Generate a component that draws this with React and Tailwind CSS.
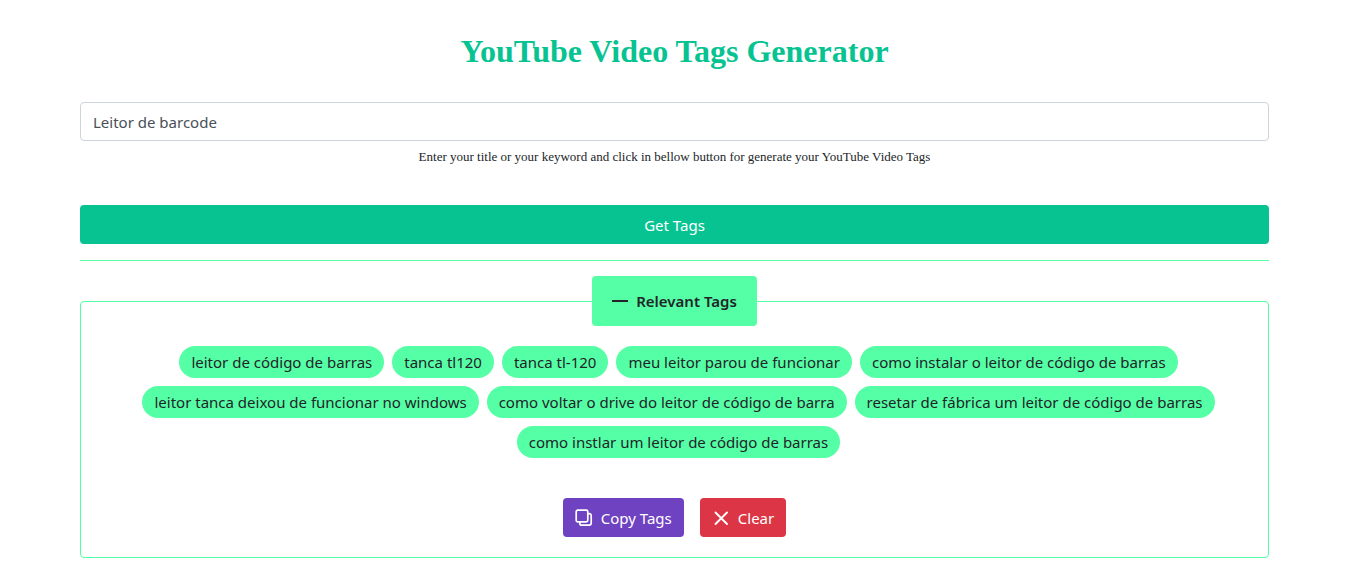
import React, { useState } from "react";

const TAGS = [
  "leitor de código de barras",
  "tanca tl120",
  "tanca tl-120",
  "meu leitor parou de funcionar",
  "como instalar o leitor de código de barras",
  "leitor tanca deixou de funcionar no windows",
  "como voltar o drive do leitor de código de barra",
  "resetar de fábrica um leitor de código de barras",
  "como instlar um leitor de código de barras",
];

function DashIcon() {
  return (
    <svg className="h-4 w-4" viewBox="0 0 16 16" fill="none" stroke="currentColor" strokeWidth="2" aria-hidden="true">
      <path d="M0 8h16" />
    </svg>
  );
}

function CopyIcon() {
  return (
    <svg className="h-[18px] w-[18px]" viewBox="0 0 18 18" fill="none" stroke="currentColor" strokeWidth="1.7" strokeLinejoin="round" strokeLinecap="round" aria-hidden="true">
      <rect x="1.2" y="1.2" width="11.6" height="11.6" rx="1.6" />
      <path d="M13 4.6h1.2a2 2 0 0 1 2 2v7.4a2.2 2.2 0 0 1-2.2 2.2H6.8a2 2 0 0 1-2-2V13" />
    </svg>
  );
}

function CloseIcon() {
  return (
    <svg className="h-[18px] w-[18px]" viewBox="0 0 18 18" fill="none" stroke="currentColor" strokeWidth="1.9" strokeLinecap="round" aria-hidden="true">
      <path d="M3.5 3.5l11.5 11.5M15 3.5L3.5 15" />
    </svg>
  );
}

export default function App() {
  const [title, setTitle] = useState("Leitor de barcode");
  const [tags, setTags] = useState(TAGS);

  return (
    <main className="bg-white pt-8 pr-[77px] pb-7 pl-20 font-['Noto_Sans',sans-serif] text-[15px] leading-6 text-[#212529]">
      <h1 className="text-center font-['Liberation_Serif',serif] text-[32px] leading-[38px] font-bold text-[#07c392]">
        YouTube Video Tags Generator
      </h1>

      <form className="mt-8" onSubmit={(e) => e.preventDefault()}>
        <input
          type="text"
          aria-label="Title or keyword"
          aria-describedby="hint"
          value={title}
          onChange={(e) => setTitle(e.target.value)}
          className="block h-[39px] w-full rounded border border-[#ced4da] bg-white px-3 text-[#495057]"
        />
        <p id="hint" className="mt-1.5 text-center font-['Liberation_Serif',serif] text-[13px] leading-5">
          Enter your title or your keyword and click in bellow button for generate your YouTube Video Tags
        </p>
        <button type="submit" className="mt-[38px] block h-[39px] w-full rounded bg-[#07c392] text-white">
          Get Tags
        </button>
      </form>

      <hr className="mt-4 border-t border-[#55ffa5]" />

      <fieldset className="mt-[15px] rounded border border-[#55ffa5] px-5 pb-5">
        <legend className="mx-auto flex h-[50px] items-center gap-2 rounded bg-[#55ffa5] px-5 font-semibold">
          <DashIcon />
          Relevant Tags
        </legend>
        <ul className="mt-5 flex flex-wrap justify-center gap-y-2">
          {tags.map((tag) => (
            <li key={tag} className="ml-2 rounded-full bg-[#55ffa5] px-3 py-1">
              {tag}
            </li>
          ))}
        </ul>
        <div className="mt-10 flex justify-center gap-4 text-white">
          <button type="button" onClick={() => navigator.clipboard?.writeText(tags.join(", "))} className="flex h-[39px] items-center gap-2 rounded bg-[#6f42c1] px-3">
            <CopyIcon />
            Copy Tags
          </button>
          <button type="button" onClick={() => setTags([])} className="flex h-[39px] items-center gap-2 rounded bg-[#dc3545] px-3">
            <CloseIcon />
            Clear
          </button>
        </div>
      </fieldset>
    </main>
  );
}
